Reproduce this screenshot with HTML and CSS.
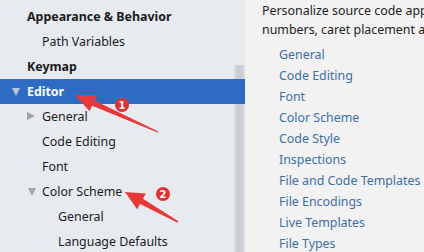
FILE: index.html
```html
<!DOCTYPE html>
<html>
<head>
<meta charset="utf-8">
<link rel="stylesheet" href="styles.css">
</head>
<body>
<div class="app">
  <div class="sidebar">
    <div class="scrollbar"><div class="thumb"></div></div>
    <ul class="tree">
      <li class="row lvl0 bold">Appearance &amp; Behavior</li>
      <li class="row lvl1">Path Variables</li>
      <li class="row lvl0 bold">Keymap</li>
      <li class="row lvl0 bold selected"><span class="tri down light"></span>Editor</li>
      <li class="row lvl1"><span class="tri right"></span>General</li>
      <li class="row lvl1">Code Editing</li>
      <li class="row lvl1">Font</li>
      <li class="row lvl1"><span class="tri down"></span>Color Scheme</li>
      <li class="row lvl2">General</li>
      <li class="row lvl2">Language Defaults</li>
    </ul>
  </div>
  <div class="main">
    <p class="desc">Personalize source code appearance by fonts, highlighting, line<br>numbers, caret placement and more.</p>
    <ul class="links">
      <li>General</li>
      <li>Code Editing</li>
      <li>Font</li>
      <li>Color Scheme</li>
      <li>Code Style</li>
      <li>Inspections</li>
      <li>File and Code Templates</li>
      <li>File Encodings</li>
      <li>Live Templates</li>
      <li>File Types</li>
    </ul>
  </div>
</div>
<svg class="annot" width="424" height="252" viewBox="0 0 424 252">
  <polygon fill="#e8383a" points="75,95 97,94.9 94.5,100.4 157.8,131.2 158.2,132.8 92.1,105.8 89.6,111.3"/>
  <circle cx="122" cy="105" r="7" fill="#e4302f"/>
  <text x="122" y="108.8" class="badge">1</text>
  <polygon fill="#e8383a" points="125,192 145.9,193.6 143,198.8 178.4,221.3 177.6,222.7 140,204 137.1,209.2"/>
  <circle cx="163" cy="194" r="7" fill="#e4302f"/>
  <text x="163" y="197.8" class="badge">2</text>
</svg>
</body>
</html>
```
FILE: styles.css
```css
html, body {
  margin: 0;
  padding: 0;
  width: 424px;
  height: 252px;
  overflow: hidden;
}
body {
  font-family: "Noto Sans", "Open Sans", sans-serif;
  font-size: 12.4px;
  color: #1b1b1b;
  position: relative;
}
.app {
  display: flex;
  height: 252px;
}
.sidebar {
  width: 245px;
  flex: none;
  background: #e7ebf0;
  position: relative;
}
.scrollbar {
  position: absolute;
  left: 234px;
  top: 65px;
  width: 11px;
  bottom: 0;
  background: #d9dce1;
}
.thumb {
  margin-left: 2px;
  width: 7px;
  height: 100%;
  background: #cbced4;
}
.tree {
  list-style: none;
  margin: 0;
  padding: 4px 0 0 0;
  position: relative;
}
.row {
  height: 25px;
  line-height: 25px;
  white-space: nowrap;
  position: relative;
}
.lvl0 { padding-left: 27px; }
.lvl1 { padding-left: 42px; }
.lvl2 { padding-left: 58px; }
.bold { font-weight: bold; }
.selected {
  background: #2d6cc2;
  color: #ffffff;
}
.tri {
  position: absolute;
  width: 0;
  height: 0;
}
.tri.down {
  border-left: 4px solid transparent;
  border-right: 4px solid transparent;
  border-top: 8px solid #a3a6aa;
  top: 9px;
}
.lvl0 .tri.down { left: 12px; }
.lvl1 .tri.down { left: 28px; }
.tri.down.light { border-top-color: #b9c4d2; }
.tri.right {
  border-top: 4.5px solid transparent;
  border-bottom: 4.5px solid transparent;
  border-left: 8px solid #a0a3a7;
  left: 27px;
  top: 8px;
}
.main {
  flex: 1;
  background: #f2f2f2;
  padding-left: 17px;
  overflow: hidden;
}
.desc {
  margin: 1px 0 0 0;
  line-height: 19px;
  white-space: nowrap;
  color: #222;
}
.links {
  list-style: none;
  margin: 5px 0 0 0;
  padding: 0 0 0 17px;
}
.links li {
  height: 21px;
  line-height: 21px;
  color: #3c6ea8;
  white-space: nowrap;
}
.annot {
  position: absolute;
  left: 0;
  top: 0;
}
.badge {
  fill: #ffffff;
  font-family: "DejaVu Sans", sans-serif;
  font-weight: bold;
  font-size: 10px;
  text-anchor: middle;
}
```
